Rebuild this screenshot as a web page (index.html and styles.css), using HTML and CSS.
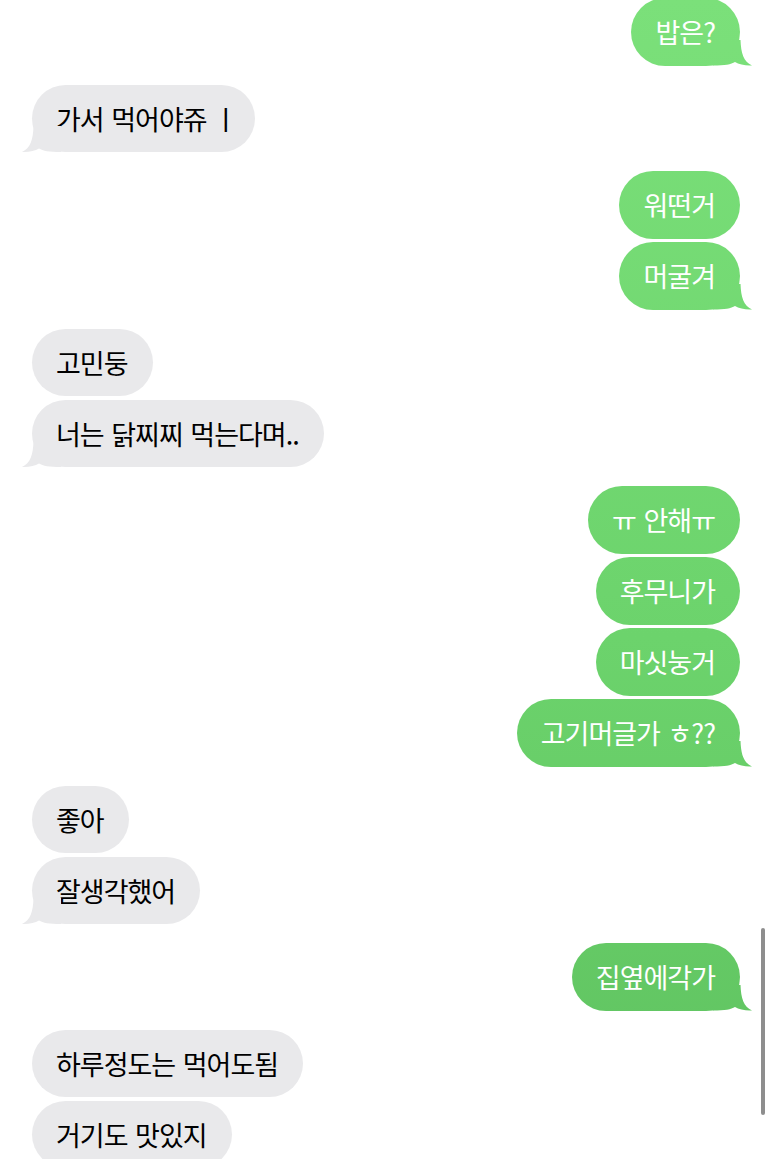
FILE: index.html
```html
<!DOCTYPE html>
<html lang="ko">
<head>
  <meta charset="UTF-8" />
  <meta name="viewport" content="width=device-width, initial-scale=1.0" />
  <title>메시지</title>
  <link rel="stylesheet" href="styles.css">
</head>
<body>

<div class="chat">
  <div class="group sent first">
    <p class="bubble tail">밥은?</p>
  </div>

  <div class="group recv">
    <p class="bubble tail">가서 먹어야쥬 <span class="jamo">ㅣ</span></p>
  </div>

  <div class="group sent">
    <p class="bubble">워떤거</p>
    <p class="bubble tail">머굴겨</p>
  </div>

  <div class="group recv">
    <p class="bubble">고민둥</p>
    <p class="bubble tail">너는 닭찌찌 먹는다며..</p>
  </div>

  <div class="group sent">
    <p class="bubble">ㅠ 안해ㅠ</p>
    <p class="bubble">후무니가</p>
    <p class="bubble">마싯눙거</p>
    <p class="bubble tail">고기머글가 ㅎ??</p>
  </div>

  <div class="group recv">
    <p class="bubble">좋아</p>
    <p class="bubble tail">잘생각했어</p>
  </div>

  <div class="group sent">
    <p class="bubble tail">집옆에각가</p>
  </div>

  <div class="group recv">
    <p class="bubble">하루정도는 먹어도됨</p>
    <p class="bubble">거기도 맛있지</p>
  </div>
</div>

<!-- scroll indicator -->
<div class="scrollbar"></div>

</body>
</html>
```

FILE: styles.css
```css
body {
  margin: 0;
  height: 1159px;
  overflow: hidden;
  background: #fff;
  font-family: "Noto Sans CJK KR", "Noto Sans", sans-serif;
}

.chat {
  display: flex;
  flex-direction: column;
  gap: 19px;
  padding: 0 33px 0 32px;
  margin-top: -2px;
}

.group {
  display: flex;
  flex-direction: column;
  gap: 3.5px;
}

.group.sent {
  align-items: flex-end;
}

.group.recv {
  align-items: flex-start;
}

.bubble {
  position: relative;
  margin: 0;
  height: 67.5px;
  box-sizing: border-box;
  padding: 0 25px 0 24px;
  border-radius: 34px;
  font-size: 27px;
  letter-spacing: -1px;
  word-spacing: 1px;
  line-height: 67.5px;
  white-space: nowrap;
}

.jamo {
  margin: 0 -7px 0 -1px;
}

/* green gradient runs down the whole screen */
.sent .bubble {
  color: #fff;
  background: linear-gradient(to bottom, #7be07a 0%, #6cd36c 55%, #5fc260 100%) fixed;
}

.recv .bubble {
  color: #000;
  background: #e9e9eb;
}

/* tails */
.bubble.tail::before {
  content: "";
  position: absolute;
  bottom: 0;
  width: 40px;
  height: 26px;
}

.sent .bubble.tail::before {
  right: -13px;
  background: linear-gradient(to bottom, #7be07a 0%, #6cd36c 55%, #5fc260 100%) fixed;
  clip-path: path("M 0 0 L 27.5 0 C 28 14 30.5 22 39 26 C 33 26.5 26 25 22 22.5 C 18 25 12 26 0 26 Z");
}

.recv .bubble.tail::before {
  left: -11px;
  background: #e9e9eb;
  clip-path: path("M 40 0 L 12.5 0 C 12 14 9.5 22 1 26 C 7 26.5 14 25 18 22.5 C 22 25 28 26 40 26 Z");
}

.scrollbar {
  position: absolute;
  left: 761px;
  top: 928px;
  width: 4px;
  height: 187px;
  border-radius: 2px;
  background: #8e8e8e;
}
```
